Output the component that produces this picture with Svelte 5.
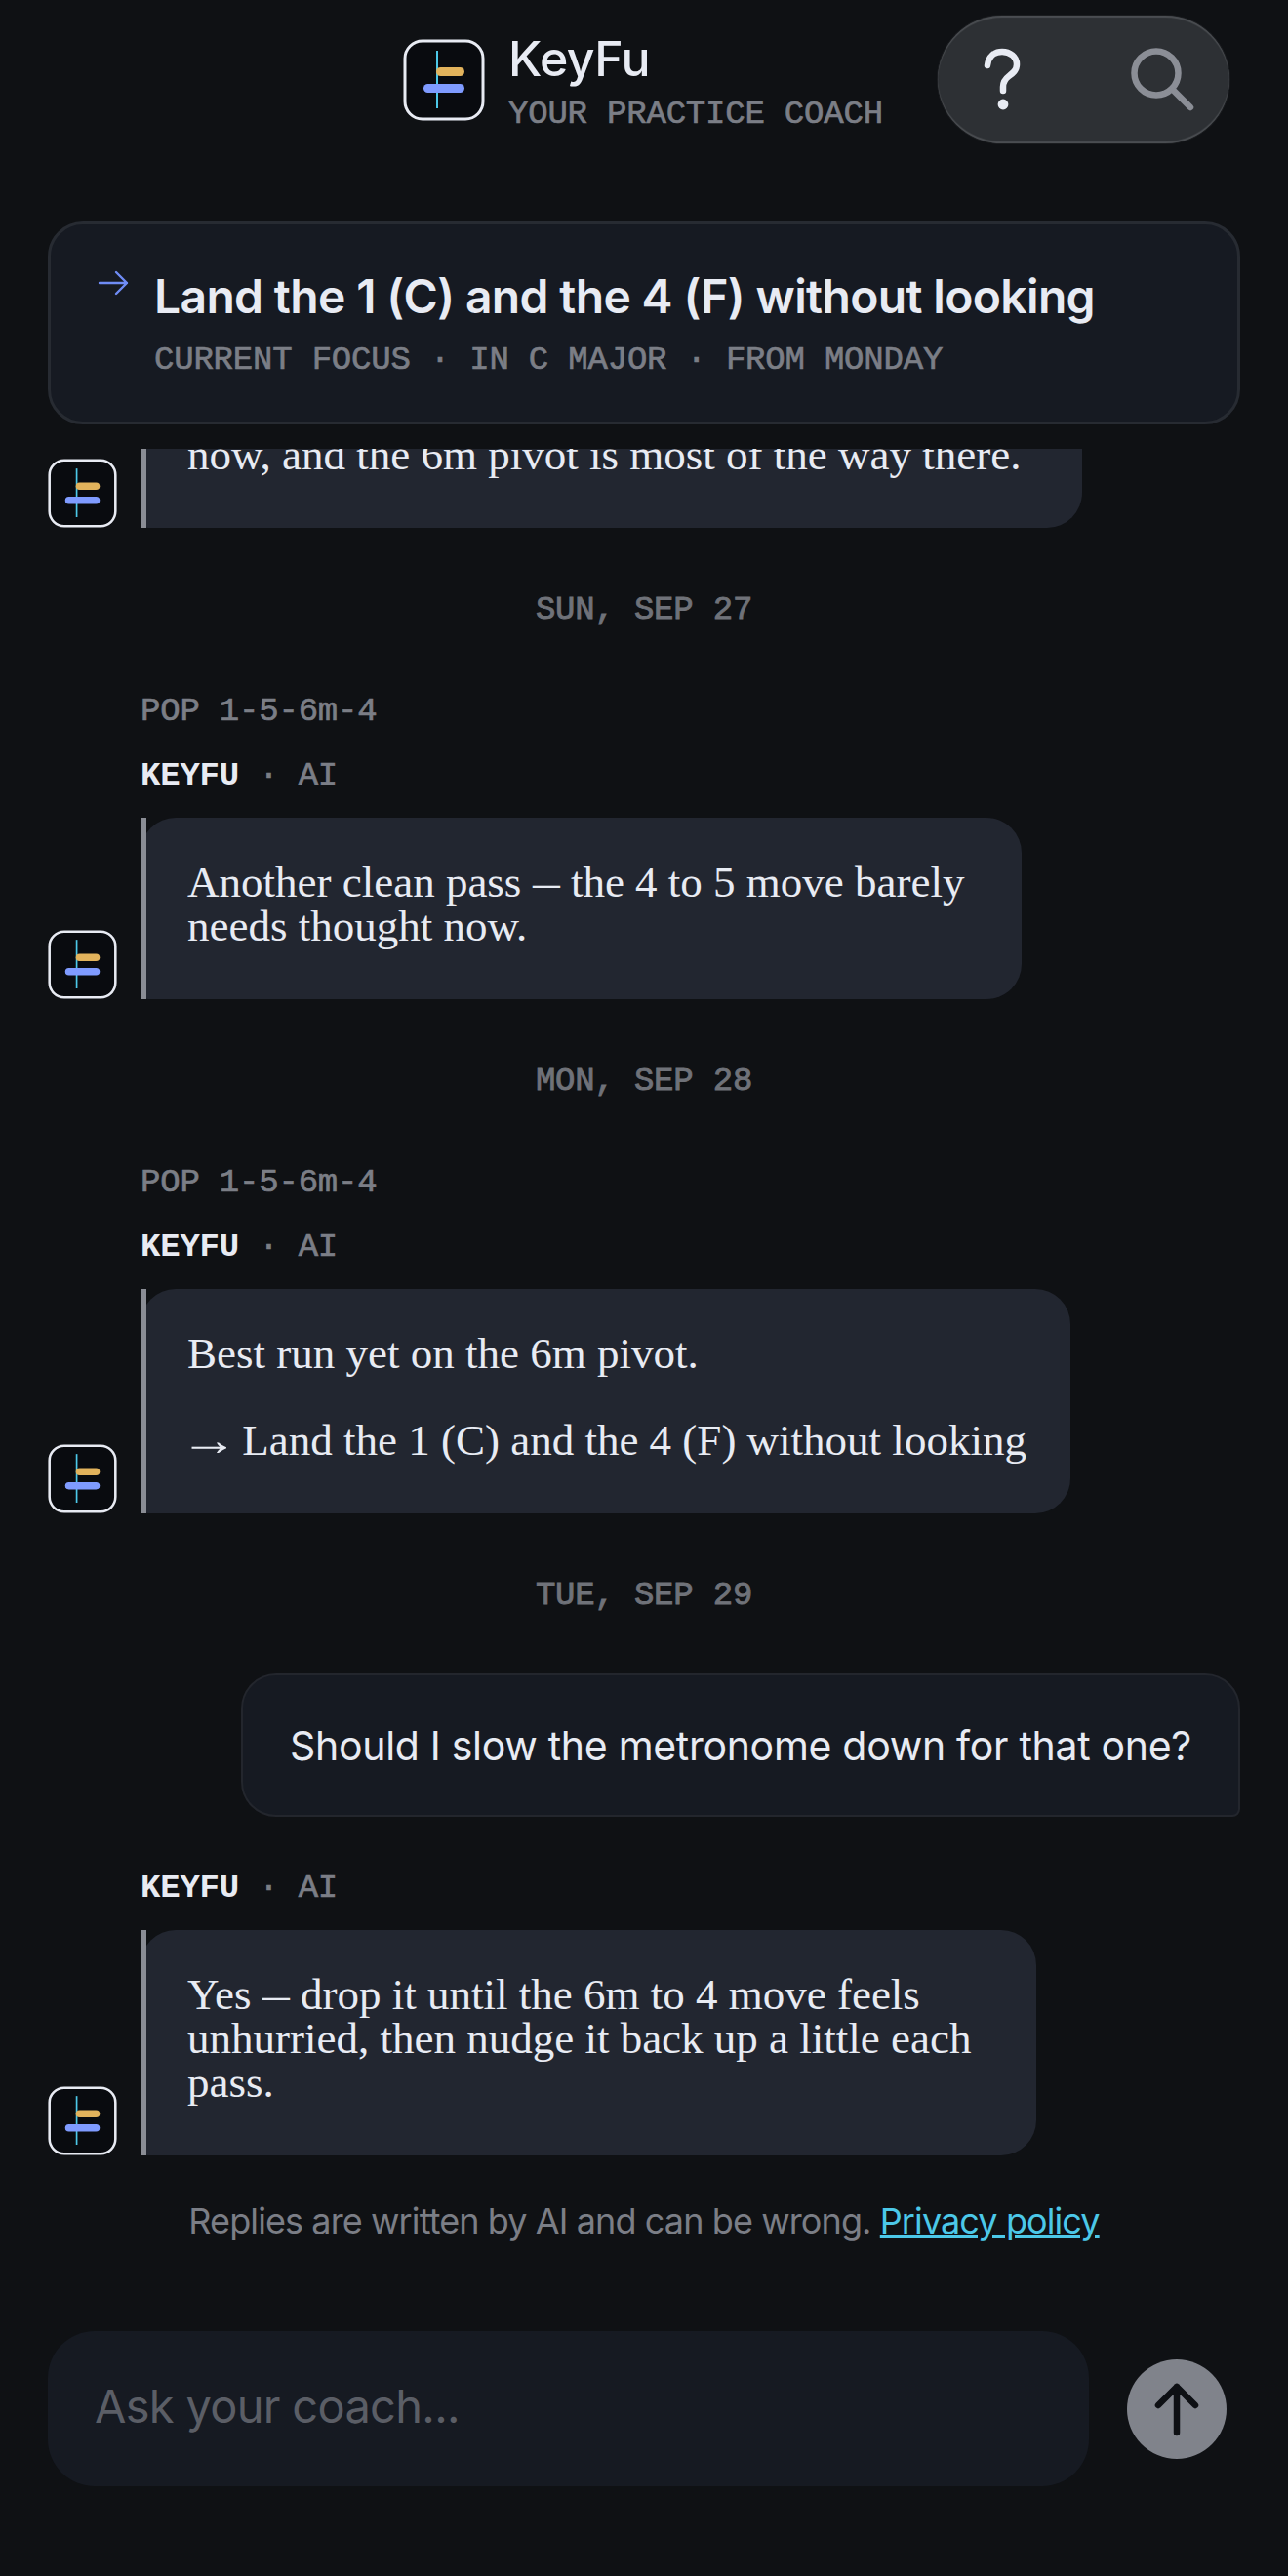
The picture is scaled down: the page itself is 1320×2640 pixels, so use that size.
<script lang="ts">
  type Row =
    | { kind: 'date'; text: string }
    | { kind: 'coach'; tag?: string; who?: boolean; paras: string[]; width: number }
    | { kind: 'user'; text: string };

  const rows: Row[] = [
    { kind: 'coach', who: false, paras: ['now, and the 6m pivot is most of the way there.'], width: 965 },
    { kind: 'date', text: 'SUN, SEP 27' },
    { kind: 'coach', tag: 'POP 1-5-6m-4', paras: ['Another clean pass — the 4 to 5 move barely\nneeds thought now.'], width: 903 },
    { kind: 'date', text: 'MON, SEP 28' },
    { kind: 'coach', tag: 'POP 1-5-6m-4', paras: ['Best run yet on the 6m pivot.', '→ Land the 1 (C) and the 4 (F) without looking'], width: 953 },
    { kind: 'date', text: 'TUE, SEP 29' },
    { kind: 'user', text: 'Should I slow the metronome down for that one?' },
    { kind: 'coach', paras: ['Yes — drop it until the 6m to 4 move feels\nunhurried, then nudge it back up a little each\npass.'], width: 918 }
  ];

  // the reference face has a short em dash and a long arrow, so those two get their own span
  const parts = (p: string) => p.split(/([—→])/);
</script>

{#snippet logo(cls: string)}
  <svg class={cls} viewBox="0 0 84 84" aria-hidden="true">
    <rect x="2" y="2" width="80" height="80" rx="18" fill="#090b0f" stroke="#e8ebf3" stroke-width="3" />
    <line x1="35" y1="12" x2="35" y2="71" stroke="#4cc8e8" stroke-width="2" />
    <rect x="34" y="29" width="29" height="9" rx="4.5" fill="#e2b35c" />
    <rect x="21" y="46" width="42" height="9" rx="4.5" fill="#7f9bff" />
  </svg>
{/snippet}

<div class="screen">
  <header class="top">
    <div class="brand">
      {@render logo('logo-lg')}
      <div class="brand-text">
        <div class="name">KeyFu</div>
        <div class="tagline">YOUR PRACTICE COACH</div>
      </div>
    </div>
    <div class="actions">
      <button class="icon-btn" aria-label="Help">
        <svg viewBox="0 0 40 66" width="40" height="66" fill="none">
          <path d="M5 18C6 9 12 4 20 4c8 0 15 5 15 13 0 6-4 9-8 12-4 3-6 6-6 11v4" stroke="#e8ebf3" stroke-width="6.5" stroke-linecap="round" />
          <circle cx="21" cy="58" r="5.4" fill="#e8ebf3" />
        </svg>
      </button>
      <button class="icon-btn" aria-label="Search">
        <svg viewBox="0 0 66 66" width="66" height="66" fill="none" stroke="#8b8e96" stroke-width="6.5" stroke-linecap="round">
          <circle cx="26" cy="26" r="22.5" />
          <line x1="43" y1="43" x2="61" y2="61" />
        </svg>
      </button>
    </div>
  </header>

  <section class="focus">
    <svg class="focus-arrow" viewBox="0 0 32 26" fill="none" stroke="#6f8cf5" stroke-width="2.4" stroke-linecap="round" stroke-linejoin="round">
      <path d="M2 13h28M19 2l11 11-11 11" />
    </svg>
    <div>
      <div class="focus-title">Land the 1 (C) and the 4 (F) without looking</div>
      <div class="focus-sub">CURRENT FOCUS · IN C MAJOR · FROM MONDAY</div>
    </div>
  </section>

  <main class="thread">
    {#each rows as row}
      {#if row.kind === 'date'}
        <div class="date">{row.text}</div>
      {:else if row.kind === 'user'}
        <div class="user-bubble">{row.text}</div>
      {:else}
        <div class="coach">
          {#if row.tag}<div class="tag">{row.tag}</div>{/if}
          {#if row.who !== false}<div class="who"><b>KEYFU</b> · AI</div>{/if}
          <div class="coach-row">
            {@render logo('logo-sm')}
            <div class="bubble" style:width="{row.width}px">
              {#each row.paras as p}
                <p>{#each parts(p) as part}{#if part === '—'}<span class="dash">—</span>{:else if part === '→'}<span class="arrow">→</span>{:else}{part}{/if}{/each}</p>
              {/each}
            </div>
          </div>
        </div>
      {/if}
    {/each}
  </main>

  <p class="disclaimer">Replies are written by AI and can be wrong. <a href="#privacy">Privacy policy</a></p>

  <footer class="composer">
    <input class="ask" placeholder="Ask your coach..." />
    <button class="send" aria-label="Send">
      <svg viewBox="0 0 50 56" width="50" height="56" fill="none" stroke="#0e1014" stroke-width="6.5" stroke-linecap="round" stroke-linejoin="round">
        <path d="M25 52V5M6 24 25 5l19 19" />
      </svg>
    </button>
  </footer>
</div>

<style>
  :global(body) {
    background: #0f1114;
  }

  .screen {
    width: 1320px;
    height: 2640px;
    display: flex;
    flex-direction: column;
    background: #0f1114;
    color: #e8ebf3;
    font-family: Inter, "Noto Sans", sans-serif;
    overflow: hidden;
  }

  .top {
    height: 227px;
    flex: none;
    position: relative;
  }

  .brand {
    position: absolute;
    left: 413px;
    top: 40px;
    display: flex;
    gap: 24px;
  }

  .logo-lg {
    width: 84px;
    height: 84px;
    flex: none;
  }

  .logo-sm {
    width: 71px;
    height: 71px;
    flex: none;
  }

  .brand-text {
    margin-top: -7px;
  }

  .name {
    font-size: 50px;
    line-height: 54px;
    font-weight: 500;
    letter-spacing: -0.5px;
  }

  .tagline,
  .focus-sub,
  .date,
  .tag,
  .who {
    font-family: "Liberation Mono", monospace;
    font-size: 34px;
    line-height: 40px;
    color: #7b7e86;
    letter-spacing: -0.2px;
    -webkit-text-stroke: 0.7px currentColor;
  }

  .tagline {
    margin-top: 10px;
  }

  .actions {
    position: absolute;
    left: 961px;
    top: 16px;
    width: 299px;
    height: 131px;
    box-sizing: border-box;
    display: flex;
    align-items: center;
    justify-content: space-between;
    padding: 0 35px 0 46px;
    border-radius: 66px;
    background: #2d3034;
    box-shadow: inset 0 2px 1px #4a4d51, inset 0 -2px 1px #4a4d51, 0 0 0 1px #1b1d20;
  }

  .icon-btn {
    background: none;
    border: 0;
    padding: 0;
    display: flex;
  }

  .focus {
    flex: none;
    margin: 0 49px;
    height: 208px;
    box-sizing: border-box;
    display: flex;
    gap: 26px;
    padding: 46px 48px 0 48px;
    background: #161a22;
    border: 3px solid #272b32;
    border-radius: 36px;
  }

  .focus-arrow {
    width: 32px;
    height: 26px;
    flex: none;
    margin-top: 1px;
  }

  .focus-title {
    font-size: 48px;
    line-height: 56px;
    font-weight: 600;
    letter-spacing: -0.65px;
    white-space: nowrap;
  }

  .focus-sub {
    margin-top: 17px;
    white-space: nowrap;
  }

  .thread {
    flex: none;
    height: 1749px;
    margin-top: 25px;
    padding-left: 49px;
    padding-right: 49px;
    display: flex;
    flex-direction: column;
    justify-content: flex-end;
    overflow: hidden;
  }

  .date {
    text-align: center;
    margin: 64px 0;
    flex: none;
    color: #6f7279;
    -webkit-text-stroke: 0.9px currentColor;
  }

  .coach {
    flex: none;
  }

  .tag,
  .who {
    margin-left: 95px;
  }

  .tag {
    margin-bottom: 26px;
  }

  .who {
    margin-bottom: 23px;
  }

  .who b {
    color: #e8ebf3;
    font-weight: 700;
    -webkit-text-stroke: 0;
  }

  .coach-row {
    display: flex;
    align-items: flex-end;
    gap: 24px;
  }

  .bubble {
    position: relative;
    box-sizing: border-box;
    padding: 44px 0 52px 48px;
    background: #222630;
    border-radius: 36px 36px 36px 8px;
    font-family: "Liberation Serif", serif;
    font-size: 45px;
    line-height: 45px;
    white-space: pre;
  }

  .bubble::before {
    content: "";
    position: absolute;
    left: 0;
    top: 0;
    bottom: 0;
    width: 6px;
    background: #8a8d95;
  }

  .bubble p {
    margin: 0;
  }

  .bubble p + p {
    margin-top: 44px;
  }

  .dash {
    display: inline-block;
    width: 28px;
    transform: scaleX(0.62);
    transform-origin: left center;
  }

  .arrow {
    display: inline-block;
    transform: scaleX(1.33);
  }

  .user-bubble {
    flex: none;
    align-self: flex-end;
    box-sizing: border-box;
    width: 1024px;
    height: 147px;
    display: flex;
    align-items: center;
    justify-content: center;
    margin: -4px 0 53px;
    background: #161a22;
    border: 2px solid #23262d;
    border-radius: 36px 36px 8px 36px;
    font-size: 41px;
    letter-spacing: -0.3px;
    white-space: nowrap;
  }

  .disclaimer {
    flex: none;
    margin: 44px 0 0;
    text-align: center;
    font-size: 36px;
    line-height: 46px;
    letter-spacing: -0.9px;
    color: #7b7e86;
  }

  .disclaimer a {
    color: #4cc8e8;
  }

  .composer {
    flex: none;
    margin: 90px 63px 0 49px;
    display: flex;
    align-items: center;
    justify-content: space-between;
  }

  .ask {
    width: 1067px;
    height: 159px;
    box-sizing: border-box;
    padding: 0 48px 6px;
    background: #161a22;
    border: 0;
    border-radius: 48px;
    font: 47px Inter, "Noto Sans", sans-serif;
    letter-spacing: -0.7px;
    color: #e8ebf3;
  }

  .ask::placeholder {
    color: #5b5e66;
  }

  .send {
    width: 102px;
    height: 102px;
    border: 0;
    border-radius: 50%;
    padding: 0;
    background: #80838b;
    display: flex;
    align-items: center;
    justify-content: center;
  }
</style>
